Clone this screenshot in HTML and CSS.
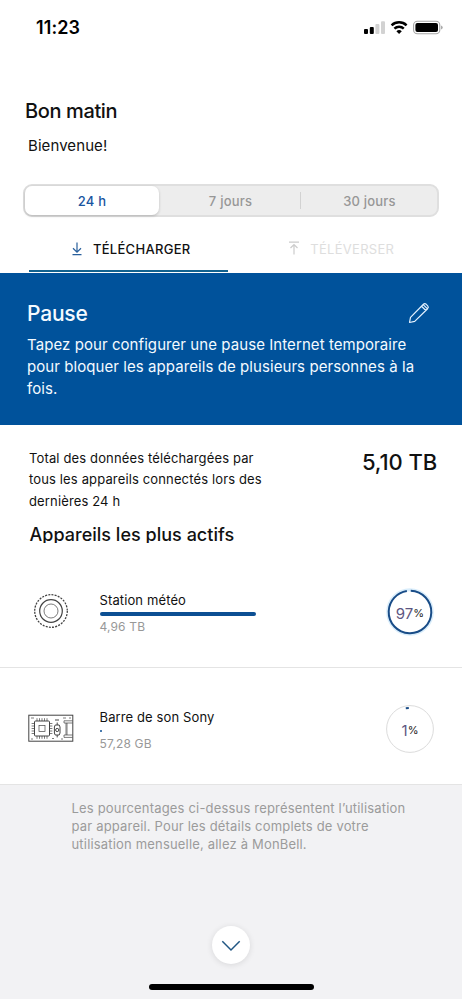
FILE: index.html
```html
<!DOCTYPE html>
<html lang="fr">
<head>
<meta charset="utf-8">
<title>Utilisation</title>
<link rel="stylesheet" href="styles.css">
</head>
<body>
<div class="statusbar">
  <span class="time">11:23</span>
  <svg class="status-icons" width="80" height="16" viewBox="0 0 80 16">
    <rect x="0" y="9" width="4" height="5" rx="1"/>
    <rect x="5.8" y="7" width="4" height="7" rx="1"/>
    <rect class="dim" x="11.4" y="4" width="4" height="10" rx="1"/>
    <rect class="dim" x="17" y="1.2" width="4" height="12.8" rx="1"/>
    <path class="wave" d="M27.6 5.3A11 11 0 0 1 42.6 5.3M30.4 8.6A6.9 6.9 0 0 1 39.8 8.6"/>
    <path d="M35.1 14L32.4 11.3A3.8 3.8 0 0 1 37.8 11.3Z"/>
    <rect class="shell" x="49.6" y="1.2" width="26.2" height="12.6" rx="3.8"/>
    <rect x="51.4" y="3" width="22.6" height="9" rx="2"/>
    <path class="nub" d="M77.2 5.6Q78.6 6.2 78.6 7.6T77.2 9.6Z"/>
  </svg>
</div>
<header class="greeting">
  <h1>Bon matin</h1>
  <p>Bienvenue!</p>
</header>
<nav class="periods">
  <span class="period active">24 h</span>
  <span class="period">7 jours</span>
  <span class="period divided">30 jours</span>
</nav>
<div class="tabs">
  <div class="tab current">
    <svg width="12" height="14" viewBox="0 0 12 14"><path d="M6 .5V10M2 6.3L6 10.2L10 6.3M1.5 12.7H10.5"/></svg>
    <span>TÉLÉCHARGER</span>
  </div>
  <div class="tab">
    <svg width="12" height="14" viewBox="0 0 12 14"><path d="M6 13.5V3.5M2.5 7L6 3.5L9.5 7M1 1.2H11"/></svg>
    <span>TÉLÉVERSER</span>
  </div>
</div>
<section class="pause">
  <div class="pause-head">
    <h2>Pause</h2>
    <svg width="22" height="22" viewBox="0 0 22 22"><path d="M1.5 20.5L2.5 15.4L15.2 2.5Q16.7 1 18.2 2.3L19.7 3.8Q21 5.2 19.6 6.7L6.7 19.4L1.5 20.5ZM13.5 4.2L17.9 8.5M15.2 2.6L19.5 6.9"/></svg>
  </div>
  <p>Tapez pour configurer une pause Internet temporaire<br>pour bloquer les appareils de plusieurs personnes à la<br>fois.</p>
</section>
<section class="summary">
  <p>Total des données téléchargées par<br>tous les appareils connectés lors des<br>dernières 24 h</p>
  <strong>5,10 TB</strong>
</section>
<h2 class="list-title">Appareils les plus actifs</h2>
<article class="device">
  <svg class="picto" width="46" height="46" viewBox="0 0 46 46">
    <circle class="dots" cx="23" cy="23" r="16.3"/>
    <circle class="ring" cx="23" cy="23" r="11.3"/>
    <circle class="thin" cx="23" cy="23" r="7"/>
  </svg>
  <div class="info">
    <h3>Station météo</h3>
    <div class="bar"></div>
    <p>4,96 TB</p>
  </div>
  <div class="gauge">
    <svg width="50" height="50" viewBox="0 0 50 50">
      <circle class="halo" cx="25" cy="25" r="22.3"/>
      <circle class="arc" cx="25" cy="25" r="21.3" pathLength="100" stroke-dasharray="97 3" transform="rotate(-88 25 25)"/>
    </svg>
    <span class="pct">97<small>%</small></span>
  </div>
</article>
<article class="device">
  <svg class="picto" width="46" height="46" viewBox="0 0 46 46">
    <rect class="board" x=".8" y="10.2" width="44" height="26"/>
    <rect class="board" x="6.5" y="16" width="15" height="15" rx="1"/>
    <rect class="thin" x="11" y="20.5" width="6" height="6"/>
    <path class="thin" d="M9 13.2V16M11.5 13.2V16M14 13.2V16M16.5 13.2V16M19 13.2V16M9 31V33.8M11.5 31V33.8M14 31V33.8M16.5 31V33.8M19 31V33.8M3.6 18.5H6.5M3.6 21H6.5M3.6 23.5H6.5M3.6 26H6.5M3.6 28.5H6.5M21.5 18.5H24.4M21.5 21H24.4M21.5 23.5H24.4M21.5 26H24.4M21.5 28.5H24.4"/>
    <path class="board" d="M27 15H31M29.2 17.5V20M29.2 30V32.4M27.2 20H31.2L32 22V28L31.2 30H27.2L26.4 28V22Z"/>
    <circle class="board" cx="29.2" cy="25" r="1.6"/>
    <path class="thin" d="M44.5 15.8H36V18H44.5M39 18V30M44.5 30H36V32.4H44.5M38 18V30M3 13H6M35 13H38M24 33.5H26M3 34H5M33 34H35M41 13H43"/>
  </svg>
  <div class="info">
    <h3>Barre de son Sony</h3>
    <div class="bar tiny"></div>
    <p>57,28 GB</p>
  </div>
  <div class="gauge">
    <svg width="50" height="50" viewBox="0 0 50 50">
      <circle class="track" cx="25" cy="25" r="23.4"/>
      <path class="arc" d="M20.8 4.3L23.8 4"/>
    </svg>
    <span class="pct">1<small>%</small></span>
  </div>
</article>
<footer>
  <p>Les pourcentages ci-dessus représentent l’utilisation<br>par appareil. Pour les détails complets de votre<br>utilisation mensuelle, allez à MonBell.</p>
  <div class="more"><svg width="20" height="12" viewBox="0 0 20 12"><path d="M1.3 1.3L10 10L18.7 1.3"/></svg></div>
  <div class="home"></div>
</footer>
</body>
</html>
```
FILE: styles.css
```css
* { box-sizing: border-box; margin: 0; padding: 0; }
html { background: #f2f2f4; }
body { width: 462px; height: 999px; display: flex; flex-direction: column; background: #fff; color: #111; font-family: Inter, sans-serif; overflow: hidden; }
svg { display: block; overflow: visible; fill: none; flex: none; }

.statusbar { height: 98px; padding: 17px 18px 0 36px; display: flex; justify-content: space-between; align-items: flex-start; }
.time { font-size: 18px; line-height: 22px; font-weight: 600; letter-spacing: .1px; color: #000; }
.status-icons { margin-top: 3px; fill: #000; }
.status-icons .dim { fill: #d2d2d2; }
.status-icons .wave { fill: none; stroke: #000; stroke-width: 2.5; }
.status-icons .shell { fill: none; stroke: #a5a5a5; stroke-width: 1.1; }
.status-icons .nub { fill: #999; }

.greeting { height: 86px; padding-left: 25px; }
.greeting h1 { font-size: 20px; line-height: 26px; font-weight: 500; letter-spacing: -.38px; }
.greeting p { margin: 11px 0 0 3px; font-size: 15px; line-height: 22px; letter-spacing: .08px; }

.periods { margin: 0 23px; height: 33px; flex: none; display: grid; grid-template-columns: 134px 1fr 137px; border: 2px solid #dfdfdf; border-radius: 9px; background: #ededed; font-size: 13px; font-weight: 500; color: #979797; letter-spacing: .2px; }
.period { display: flex; align-items: center; justify-content: center; }
.period + .period { padding-left: 2px; }
.active { background: #fff; border-radius: 7px; color: #1a55a0; box-shadow: 0 1px 3px #0003; }
.divided { background: linear-gradient(#d2d2d2, #d2d2d2) 0 50% / 1px 17px no-repeat; }

.tabs { height: 55.5px; flex: none; padding: 0 34px 0 29px; display: flex; }
.tab { width: 200px; height: 55px; display: flex; align-items: center; justify-content: center; gap: 10px; padding: 9px 0 0 4px; font-size: 13px; font-weight: 500; letter-spacing: .3px; color: #dedede; }
.tab svg { stroke: currentColor; stroke-width: 1.2; margin-top: -3px; }
.tab:last-child svg { stroke: #ccc; }
.tab.current { color: #111; border-bottom: 2px solid #12628f; padding-top: 11px; }
.tab.current svg { stroke: #285f9c; margin-top: -1px; }
.tab:last-child { font-weight: 400; padding-left: 26px; }

.pause { height: 152.5px; flex: none; padding: 28px 32px 0 27px; background: #00529b; color: #f4faff; }
.pause-head { display: flex; justify-content: space-between; height: 33.5px; }
.pause-head h2 { font-size: 21px; line-height: 26px; font-weight: 500; letter-spacing: -.2px; }
.pause-head svg { margin-top: 1px; stroke: #e4f2ff; stroke-width: 1.2; stroke-linejoin: round; }
.pause p { font-size: 15px; line-height: 22px; letter-spacing: .07px; white-space: nowrap; }

.summary { height: 98px; flex: none; padding: 22.5px 25px 0 29px; display: flex; justify-content: space-between; }
.summary p { font-size: 13px; line-height: 21.8px; letter-spacing: .14px; white-space: nowrap; }
.summary strong { font-size: 22px; line-height: 28px; font-weight: 450; letter-spacing: -.1px; }
.list-title { height: 20px; flex: none; overflow: hidden; padding-left: 29.5px; font-size: 18px; line-height: 24px; font-weight: 500; letter-spacing: .02px; }

.device { height: 117px; flex: none; display: flex; padding: 0 27px; border-bottom: 1px solid #e4e4e4; }
.list-title + .device { height: 125px; padding-top: 8px; }
.picto { margin: 37px 0 0 .5px; stroke: #444; }
.dots { stroke-width: 1.3; stroke-dasharray: 2 1.2; }
.ring { stroke-width: 1.2; }
.thin { stroke-width: .7; }
.board { stroke-width: 1; }
.info { flex: 1; margin: 38.5px 0 0 26px; }
.info h3 { font-size: 13px; line-height: 20px; font-weight: 400; letter-spacing: .12px; }
.bar { width: 156px; height: 3.5px; margin: 2.5px 0 2px; border-radius: 2px; background: #0c4f93; }
.bar.tiny { width: 2px; height: 2px; margin: 3px 0; }
.info p { font-size: 12px; line-height: 18px; letter-spacing: .15px; color: #989898; }
.gauge { width: 50px; height: 50px; margin-top: 36px; display: grid; }
.gauge > * { grid-area: 1 / 1; }
.arc { stroke: #194c87; stroke-width: 2; }
.halo { stroke: #d9edfb; stroke-width: 3; }
.track { stroke: #dcdcdc; stroke-width: 1; }
.pct { justify-self: center; align-self: center; display: flex; align-items: center; font-size: 15px; line-height: 20px; color: #5d5682; padding-top: 4px; }
.pct small { font-size: 11px; line-height: 18px; color: #222; margin-top: -2px; }

footer { flex: 1; padding: 14px 0 0; background: #f2f2f4; display: flex; flex-direction: column; align-items: center; }
footer p { align-self: flex-start; margin-left: 71.5px; font-size: 13px; line-height: 18.2px; letter-spacing: .18px; color: #9b9b9b; white-space: nowrap; }
.more { width: 38px; height: 38px; margin-top: 72px; flex: none; display: grid; place-items: center; background: #fff; border-radius: 50%; box-shadow: 0 1px 6px #0000001c; }
.more svg { stroke: #205683; stroke-width: 1.5; margin-top: 2px; }
.home { width: 165px; height: 6px; margin-top: 20px; flex: none; background: #000; border-radius: 3px; }
```
